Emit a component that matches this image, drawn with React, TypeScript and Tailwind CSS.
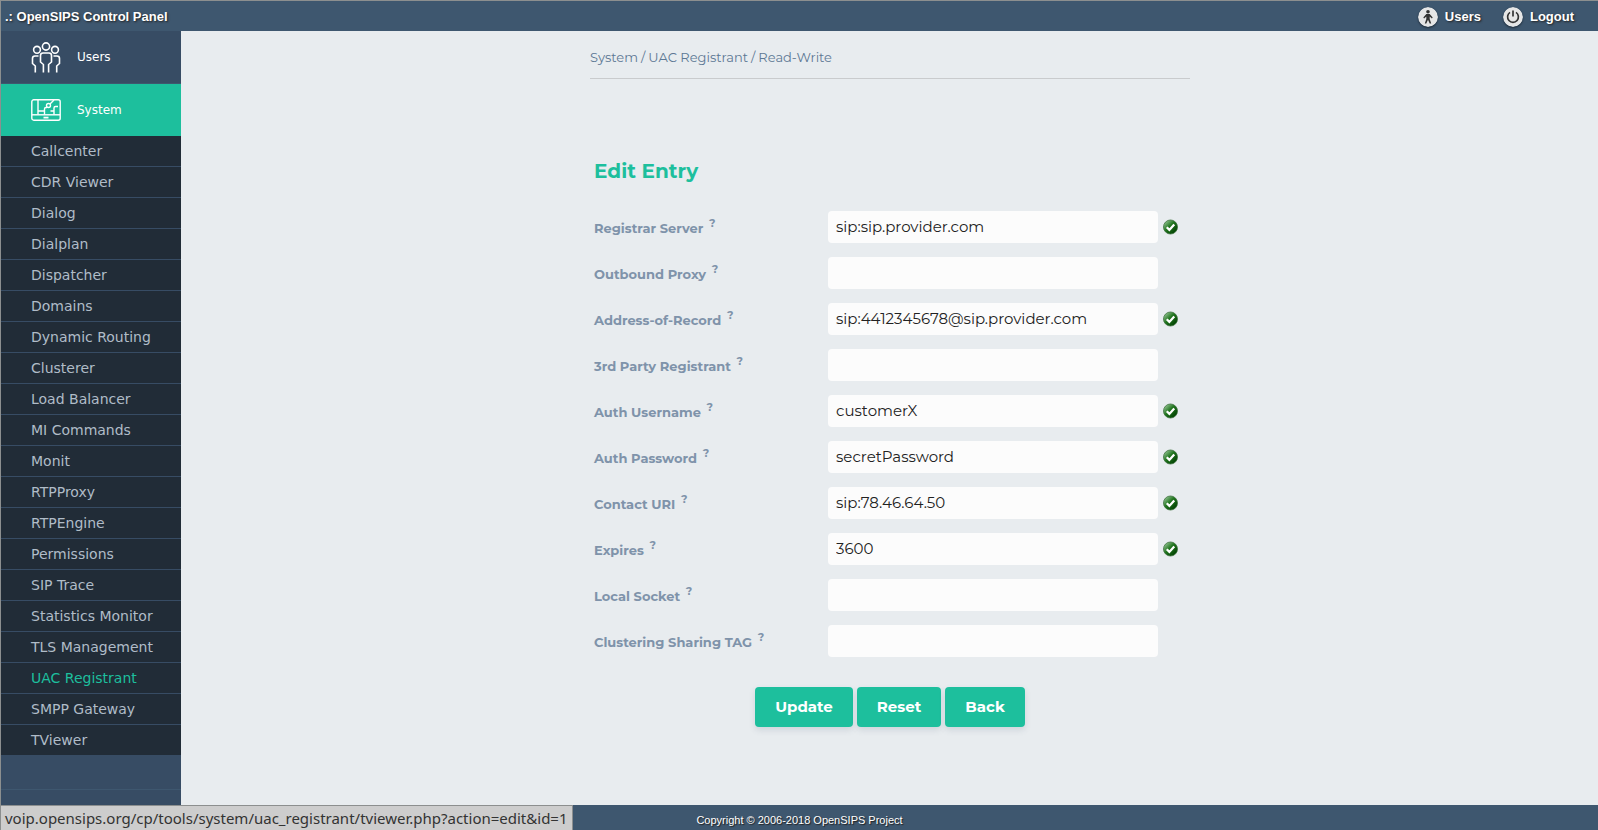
import React from 'react';

interface Field {
  id: string;
  label: string;
  value: string;
}

const menuItems = [
  'Callcenter',
  'CDR Viewer',
  'Dialog',
  'Dialplan',
  'Dispatcher',
  'Domains',
  'Dynamic Routing',
  'Clusterer',
  'Load Balancer',
  'MI Commands',
  'Monit',
  'RTPProxy',
  'RTPEngine',
  'Permissions',
  'SIP Trace',
  'Statistics Monitor',
  'TLS Management',
  'UAC Registrant',
  'SMPP Gateway',
  'TViewer',
];

const fields: Field[] = [
  { id: 'registrar', label: 'Registrar Server', value: 'sip:sip.provider.com' },
  { id: 'proxy', label: 'Outbound Proxy', value: '' },
  { id: 'aor', label: 'Address-of-Record', value: 'sip:4412345678@sip.provider.com' },
  { id: 'third_party', label: '3rd Party Registrant', value: '' },
  { id: 'username', label: 'Auth Username', value: 'customerX' },
  { id: 'password', label: 'Auth Password', value: 'secretPassword' },
  { id: 'contact', label: 'Contact URI', value: 'sip:78.46.64.50' },
  { id: 'expiry', label: 'Expires', value: '3600' },
  { id: 'socket', label: 'Local Socket', value: '' },
  { id: 'cluster_tag', label: 'Clustering Sharing TAG', value: '' },
];

const UsersIcon = () => (
  <svg width="30" height="32" viewBox="0 0 30 32" fill="none" stroke="#fff" strokeWidth="1.6">
    <circle cx="15" cy="5.500" r="3.600" />
    <circle cx="6" cy="8.800" r="3.400" />
    <circle cx="24" cy="8.800" r="3.400" />
    <path d="M12.400 31.500v-8L9.500 21v-6.500q0-2.500 2.500-2.500h6q2.500 0 2.500 2.500V21l-2.900 2.500v8" />
    <path d="M7.500 15H4q-2.500 0-2.500 2.500v5L4.300 25v6.500" />
    <path d="M22.500 15H26q2.500 0 2.500 2.500v5L25.700 25v6.500" />
  </svg>
);

const SystemIcon = () => (
  <svg width="30" height="22" viewBox="0 0 30 22" fill="none" stroke="#fff" strokeWidth="1.4">
    <rect x="0.8" y="0.8" width="28.400" height="20.400" rx="2" />
    <path d="M1 15.800h28" />
    <path d="M12.500 18.600h5" strokeWidth="1.800" />
    <path d="M7 1v14.500M7 12h6.500M13.500 15.500V10q0-1.500 1.500-1.500h1" />
    <circle cx="17.500" cy="6.500" r="2" />
    <path d="M19 5l4-4M19.500 12h3.500M23 15.500V9q0-1.500 1.500-1.500h2.500" />
  </svg>
);

const WalkerIcon = () => (
  <svg width="20" height="20" viewBox="0 0 20 20" className="rounded-full shadow-[0_1px_2px_rgba(0,0,0,0.5)]">
    <circle cx="10" cy="10" r="10" fill="#e6e6e6" />
    <circle cx="10" cy="4.800" r="1.800" fill="#333" />
    <path d="M8.300 7h3.400l3 3.600-.8.8-2.200-1.900v2.600l1.500 4.400h-1.500L10 12.700l-1.700 3.800H6.800l1.500-4.400V9.500l-2.200 1.900-.8-.8z" fill="#333" />
  </svg>
);

const PowerIcon = () => (
  <svg width="20" height="20" viewBox="0 0 20 20" className="rounded-full shadow-[0_1px_2px_rgba(0,0,0,0.5)]">
    <circle cx="10" cy="10" r="10" fill="#e6e6e6" />
    <path d="M7 5.400a5.400 5.400 0 1 0 6 0M10 3.600v6" fill="none" stroke="#333" strokeWidth="1.700" />
  </svg>
);

const CheckIcon = () => (
  <svg width="15" height="16" viewBox="0 0 16 16">
    <defs>
      <linearGradient id="tick" x1="0" y1="0" x2="1" y2="1">
        <stop offset="0" stopColor="#b5dcb5" />
        <stop offset="0.450" stopColor="#21751f" />
        <stop offset="0.800" stopColor="#064a06" />
        <stop offset="1" stopColor="#3f9a3b" />
      </linearGradient>
    </defs>
    <circle cx="8" cy="8" r="7.500" fill="url(#tick)" stroke="#3c6f3c" strokeWidth="0.800" />
    <path d="M4 8.300l2.800 2.800L12 5.300" fill="none" stroke="#fff" strokeWidth="2.400" />
  </svg>
);

const Header = () => (
  <header className="flex h-[31px] items-center justify-between border-t border-[#8c8f8f] bg-[#3e576f] pt-px pr-6 pl-1 font-['Liberation_Sans',sans-serif] text-[13px] font-bold text-white [text-shadow:1px_1px_2px_#222]">
    <h1>.: OpenSIPS Control Panel</h1>
    <nav className="flex gap-[22px]">
      <a href="#users" className="flex items-center gap-[7px]">
        <WalkerIcon />
        Users
      </a>
      <a href="#logout" className="flex items-center gap-[7px]">
        <PowerIcon />
        Logout
      </a>
    </nav>
  </header>
);

const Sidebar = () => (
  <aside className="w-[180px] shrink-0 bg-[#374c64] font-['DejaVu_Sans',sans-serif]">
    <a href="#users" className="flex h-[53px] items-center gap-4 border-b border-[#3e576f] pl-[30px] text-[12px] text-white">
      <UsersIcon />
      Users
    </a>
    <a href="#system" className="flex h-[52px] items-center gap-4 bg-[#1dbf9d] pl-[30px] text-[12px] text-white">
      <SystemIcon />
      System
    </a>
    <ul>
      {menuItems.map((item) => (
        <li key={item} className="h-[31px] border-b border-[#374c64] bg-[#212c37]">
          <a
            href="#tool"
            className={`block pl-[30px] text-[14px] leading-[30px] ${
              item === 'UAC Registrant' ? 'text-[#1dbf9d]' : 'text-[#b0bcc8]'
            }`}
          >
            {item}
          </a>
        </li>
      ))}
    </ul>
    <div className="h-[34px] border-b border-[#3e576f]" />
  </aside>
);

const FieldRow = ({ field }: { field: Field }) => (
  <div className="flex h-8 items-center">
    <label htmlFor={field.id} className="w-[234px] pt-[3px] text-[13px] font-bold text-[#7f93aa]">
      {field.label} <sup className="pl-0.5 text-[11px]">?</sup>
    </label>
    <input
      id={field.id}
      type="text"
      defaultValue={field.value}
      className="mr-[5px] h-8 w-[330px] rounded bg-[#fcfcfc] px-2 pb-0.5 text-[15px] text-[#222] outline-none"
    />
    {field.value && <CheckIcon />}
  </div>
);

const buttonStyle = 'h-10 rounded bg-[#1dbf9d] px-5 text-[15px] font-bold text-white shadow-[0_3px_6px_rgba(60,80,110,0.15)]';

const App: React.FC = () => {
  return (
    <div className="flex min-h-screen flex-col border-l border-[#8c8f8f] bg-[#e8ecef]">
      <Header />
      <div className="flex grow">
        <Sidebar />
        <main className="grow pl-px font-['Montserrat','Inter',sans-serif]">
          <div className="mx-auto w-[600px]">
            <nav className="flex h-12 items-center gap-[3px] border-b border-[#c9cbcd] pt-1.5 text-[13px] text-[#5d7894]">
              <a href="#system">System</a>/<a href="#registrant">UAC Registrant</a>/<span>Read-Write</span>
            </nav>
            <form className="px-1 pt-[77px]" onSubmit={(e) => e.preventDefault()}>
              <h2 className="text-[20px] leading-[30px] font-bold text-[#1dbf9d]">Edit Entry</h2>
              <div className="flex flex-col gap-[14px] pt-[25px]">
                {fields.map((field) => (
                  <FieldRow key={field.id} field={field} />
                ))}
              </div>
              <div className="flex justify-center gap-1 pt-[30px]">
                <button type="submit" className={buttonStyle}>Update</button>
                <button type="reset" className={buttonStyle}>Reset</button>
                <button type="button" className={buttonStyle}>Back</button>
              </div>
            </form>
          </div>
        </main>
      </div>
      <footer className="flex h-[25px] items-center justify-center bg-[#3e576f] pt-1.5 font-['Liberation_Sans',sans-serif] text-[11px] text-white [text-shadow:1px_1px_1px_#222]">
        Copyright © 2006-2018 OpenSIPS Project
      </footer>
      {/* link preview shown by the browser */}
      <div className="fixed bottom-0 left-0 h-[25px] border border-b-0 border-[#8c8f8f] bg-[#cdcdcd] px-1 font-['Noto_Sans',sans-serif] text-[15px] leading-6 text-[#333]">
        voip.opensips.org/cp/tools/system/uac_registrant/tviewer.php?action=edit&amp;id=1
      </div>
    </div>
  );
};

export default App;
